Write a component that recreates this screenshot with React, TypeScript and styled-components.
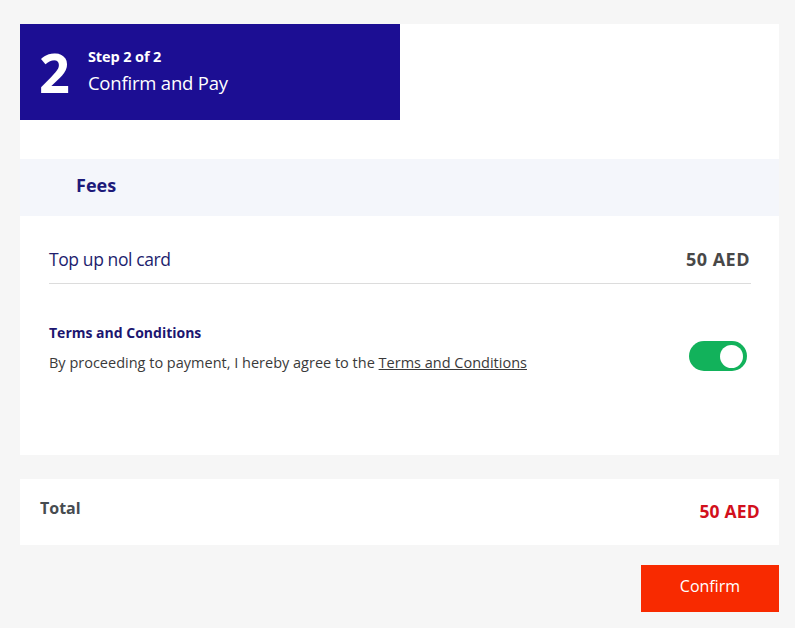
import React from "react";
import styled, { createGlobalStyle } from "styled-components";

const Global = createGlobalStyle`
  html, body { margin: 0; padding: 0; background: #f6f6f6; }
  body { font-family: "Open Sans", "Noto Sans", sans-serif; }
  * { box-sizing: border-box; }
`;

const Page = styled.div`
  padding: 24px 16px 16px 20px;
  display: flex;
  flex-direction: column;
`;

const Card = styled.section`
  background: #ffffff;
  height: 431px;
  display: flex;
  flex-direction: column;
`;

const StepHeader = styled.div`
  width: 380px;
  height: 96px;
  background: #1c0e93;
  color: #ffffff;
  display: flex;
  align-items: center;
  padding-left: 19px;
  gap: 18px;
`;

const StepNumber = styled.div`
  font-size: 54px;
  font-weight: 700;
  line-height: 1;
  margin-top: -1px;
`;

const StepTexts = styled.div`
  display: flex;
  flex-direction: column;
`;

const StepSmall = styled.div`
  font-size: 14.5px;
  font-weight: 700;
  line-height: 20px;
  letter-spacing: -0.1px;
  margin-top: -1px;
`;

const StepTitle = styled.div`
  font-size: 18.5px;
  line-height: 26px;
  margin-top: 3px;
  letter-spacing: -0.2px;
`;

const FeesBand = styled.div`
  margin-top: 39px;
  height: 57px;
  background: #f4f6fb;
  display: flex;
  align-items: center;
  padding-left: 56px;
  padding-bottom: 5px;
  font-size: 18px;
  font-weight: 700;
  color: #1d1a7a;
`;

const Content = styled.div`
  padding: 0 28px 0 29px;
  display: flex;
  flex-direction: column;
`;

const FeeRow = styled.div`
  height: 68px;
  display: flex;
  align-items: center;
  justify-content: space-between;
  padding-top: 19px;
  border-bottom: 1px solid #dcdcdc;
`;

const FeeLabel = styled.span`
  font-size: 17.5px;
  color: #221e6e;
  letter-spacing: -0.4px;
`;

const FeeValue = styled.span`
  font-size: 18px;
  font-weight: 700;
  color: #484848;
  letter-spacing: 0.5px;
  margin-right: 1px;
`;

const TermsRow = styled.div`
  margin-top: 39px;
  display: flex;
  align-items: center;
  justify-content: space-between;
`;

const TermsText = styled.div`
  display: flex;
  flex-direction: column;
  gap: 10px;
`;

const TermsTitle = styled.div`
  font-size: 14px;
  font-weight: 700;
  color: #1c1670;
  line-height: 20px;
`;

const TermsBody = styled.div`
  font-size: 14.5px;
  color: #3a3a3a;
  line-height: 20px;
`;

const TermsLink = styled.a`
  color: #3a3a3a;
  text-decoration: underline;
`;

const Toggle = styled.div<{ $on: boolean }>`
  width: 58px;
  height: 30px;
  border-radius: 15px;
  background: ${(p) => (p.$on ? "#12b25b" : "#cccccc")};
  display: flex;
  align-items: center;
  justify-content: ${(p) => (p.$on ? "flex-end" : "flex-start")};
  padding: 0 4px;
  margin-right: 4px;
  margin-top: 16px;
`;

const Knob = styled.div`
  width: 23px;
  height: 23px;
  border-radius: 50%;
  background: #ffffff;
`;

const TotalCard = styled.section`
  margin-top: 24px;
  height: 66px;
  background: #ffffff;
  display: flex;
  align-items: center;
  justify-content: space-between;
  padding: 0 19px 0 20px;
`;

const TotalLabel = styled.span`
  font-size: 16px;
  font-weight: 700;
  color: #474c50;
  margin-top: -8px;
`;

const TotalValue = styled.span`
  font-size: 17.5px;
  font-weight: 700;
  color: #d2101c;
  margin-top: -3px;
  letter-spacing: 0.2px;
`;

const Actions = styled.div`
  margin-top: 20px;
  display: flex;
  justify-content: flex-end;
`;

const ConfirmButton = styled.button`
  width: 138px;
  height: 47px;
  border: none;
  background: #f82a00;
  color: #ffffff;
  font-family: inherit;
  font-size: 16px;
  padding-bottom: 6px;
  cursor: pointer;
`;

export default function App() {
  return (
    <>
      <Global />
      <Page>
        <Card>
          <StepHeader>
            <StepNumber>2</StepNumber>
            <StepTexts>
              <StepSmall>Step 2 of 2</StepSmall>
              <StepTitle>Confirm and Pay</StepTitle>
            </StepTexts>
          </StepHeader>
          <FeesBand>Fees</FeesBand>
          <Content>
            <FeeRow>
              <FeeLabel>Top up nol card</FeeLabel>
              <FeeValue>50 AED</FeeValue>
            </FeeRow>
            <TermsRow>
              <TermsText>
                <TermsTitle>Terms and Conditions</TermsTitle>
                <TermsBody>
                  By proceeding to payment, I hereby agree to the{" "}
                  <TermsLink>Terms and Conditions</TermsLink>
                </TermsBody>
              </TermsText>
              <Toggle $on={true}>
                <Knob />
              </Toggle>
            </TermsRow>
          </Content>
        </Card>
        <TotalCard>
          <TotalLabel>Total</TotalLabel>
          <TotalValue>50 AED</TotalValue>
        </TotalCard>
        <Actions>
          <ConfirmButton>Confirm</ConfirmButton>
        </Actions>
      </Page>
    </>
  );
}
